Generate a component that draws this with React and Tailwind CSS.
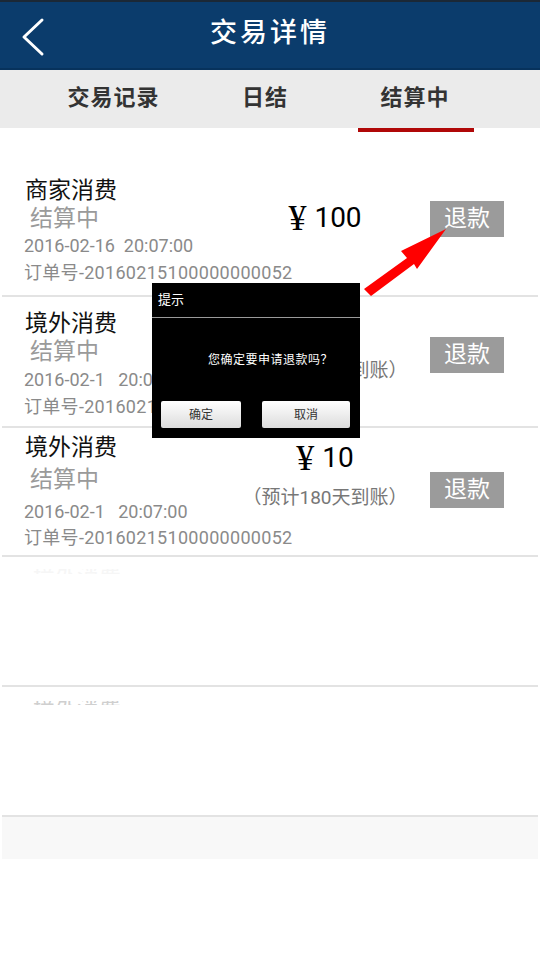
import React from "react";

const Sep = () => <div className="mx-[2px] h-[2px] bg-[#e3e3e3]" />;

function Item({ title, date, order, pt, gaps, pb, midPt, amount, note, noteGap, btnPt }) {
  return (
    <div className="flex" style={{ paddingBottom: pb }}>
      <div className="w-[230px] flex flex-col" style={{ paddingTop: pt }}>
        <div className="h-[28px] leading-[28px] text-[23px] text-[#111] pl-[25px]">{title}</div>
        <div className="h-[28px] leading-[28px] text-[23px] text-[#9a9a9a] pl-[30px]" style={{ marginTop: gaps[0] }}>结算中</div>
        <div className="h-[26px] leading-[26px] text-[18px] text-[#8a8a8a] pl-[24px] whitespace-pre" style={{ marginTop: gaps[1] }}>{date}</div>
        <div className="h-[26px] leading-[26px] text-[18px] tracking-[0.3px] text-[#8a8a8a] pl-[24px] whitespace-nowrap" style={{ marginTop: gaps[2] }}>{order}</div>
      </div>
      <div className="w-[190px] flex flex-col items-center" style={{ paddingTop: midPt }}>
        <div className="h-[36px] leading-[36px] text-[28px] text-black flex items-center">
          <span className="font-['Liberation_Serif',serif] text-[36px] w-[26px] inline-block leading-[36px]">¥</span>
          <span>{amount}</span>
        </div>
        {note && (
          <div className="h-[26px] leading-[26px] text-[19px] text-[#777] whitespace-nowrap" style={{ marginTop: noteGap }}>
            （预计180天到账）
          </div>
        )}
      </div>
      <div className="ml-[10px]" style={{ paddingTop: btnPt }}>
        <div className="w-[74px] h-[36px] bg-[#9b9b9b] text-white text-[23px] leading-[36px] text-center">退款</div>
      </div>
    </div>
  );
}

export default function App() {
  return (
    <div className="relative w-[540px] h-[960px] overflow-hidden bg-white font-[Roboto,'Noto_Sans_CJK_SC',sans-serif]">
      {/* Header */}
      <div className="h-[70px] bg-[#0b3c6c] border-t-2 border-[#1b2836] border-b-2 border-b-[#07325c] flex items-center justify-center relative">
        <svg className="absolute left-[18px] top-[14px]" width="30" height="42" viewBox="0 0 30 42">
          <path d="M24 4 L6 21 L24 38" fill="none" stroke="#fff" strokeWidth="3" strokeLinecap="round" strokeLinejoin="round" />
        </svg>
        <span className="text-white text-[27px] tracking-[3px] font-medium -mt-[4px]">交易详情</span>
      </div>
      {/* Tabs */}
      <div className="h-[58px] bg-[#ebebeb] flex items-center text-[22px] font-bold text-[#333] tracking-[1px] pb-[3px]">
        <div className="w-[227px] text-center">交易记录</div>
        <div className="w-[76px] text-center">日结</div>
        <div className="w-[224px] text-center">结算中</div>
      </div>
      <div className="h-[5px] relative">
        <div className="absolute left-[358px] top-0 w-[116px] h-[4px] bg-[#b00808]" />
      </div>

      {/* Items */}
      <Item title="商家消费" date={"2016-02-16  20:07:00"} order="订单号-20160215100000000052"
        pt={44} gaps={[0, 0, 1]} pb={9} midPt={67} amount="100" btnPt={68} />
      <Sep />
      <Item title="境外消费" date={"2016-02-1   20:07:00"} order="订单号-20160215100000000052"
        pt={13} gaps={[0, 1, 1]} pb={6} midPt={17} amount="10" note noteGap={8} btnPt={40} />
      <Sep />
      <Item title="境外消费" date={"2016-02-1   20:07:00"} order="订单号-20160215100000000052"
        pt={6} gaps={[4, 5, 0]} pb={4} midPt={12} amount="10" note noteGap={9} btnPt={44} />
      <Sep />
      <div className="h-[128px] relative overflow-hidden">
        <div className="absolute left-[33px] top-[12px] h-[5px] overflow-hidden text-[22px] text-[#f6f6f6] leading-[28px]"><div className="-mt-[6px]">境外消费</div></div>
      </div>
      <Sep />
      <div className="h-[128px] relative overflow-hidden">
        <div className="absolute left-[33px] top-[14px] h-[4px] overflow-hidden text-[22px] text-[#cfcfcf] leading-[28px]"><div className="-mt-[6px]">境外消费</div></div>
      </div>
      <Sep />
      <div className="mx-[2px] h-[42px] bg-[#f8f8f8]" />

      {/* Arrow */}
      <svg className="absolute left-0 top-0 pointer-events-none" width="540" height="960">
        <polygon points="446,229 401,251 407,258 364,289 371,296 414,264 417,269" fill="#ff0000" />
      </svg>

      {/* Dialog */}
      <div className="absolute left-[152px] top-[283px] w-[208px] h-[155px] bg-black flex flex-col">
        <div className="h-[34px] flex items-center pl-[6px] text-white text-[13px]">提示</div>
        <div className="h-[1px] bg-[#9a9a9a]" />
        <div className="h-[83px] flex items-center pl-[56px] text-white text-[12px] tracking-[0.5px]">您确定要申请退款吗？</div>
        <div className="flex pl-[9px] gap-[21px]">
          <div className="w-[80px] h-[27px] rounded-[2px] bg-gradient-to-b from-white to-[#dcdcdc] flex items-center justify-center text-[12px] text-[#333]">确定</div>
          <div className="w-[88px] h-[27px] rounded-[2px] bg-gradient-to-b from-white to-[#dcdcdc] flex items-center justify-center text-[12px] text-[#333]">取消</div>
        </div>
      </div>
    </div>
  );
}
